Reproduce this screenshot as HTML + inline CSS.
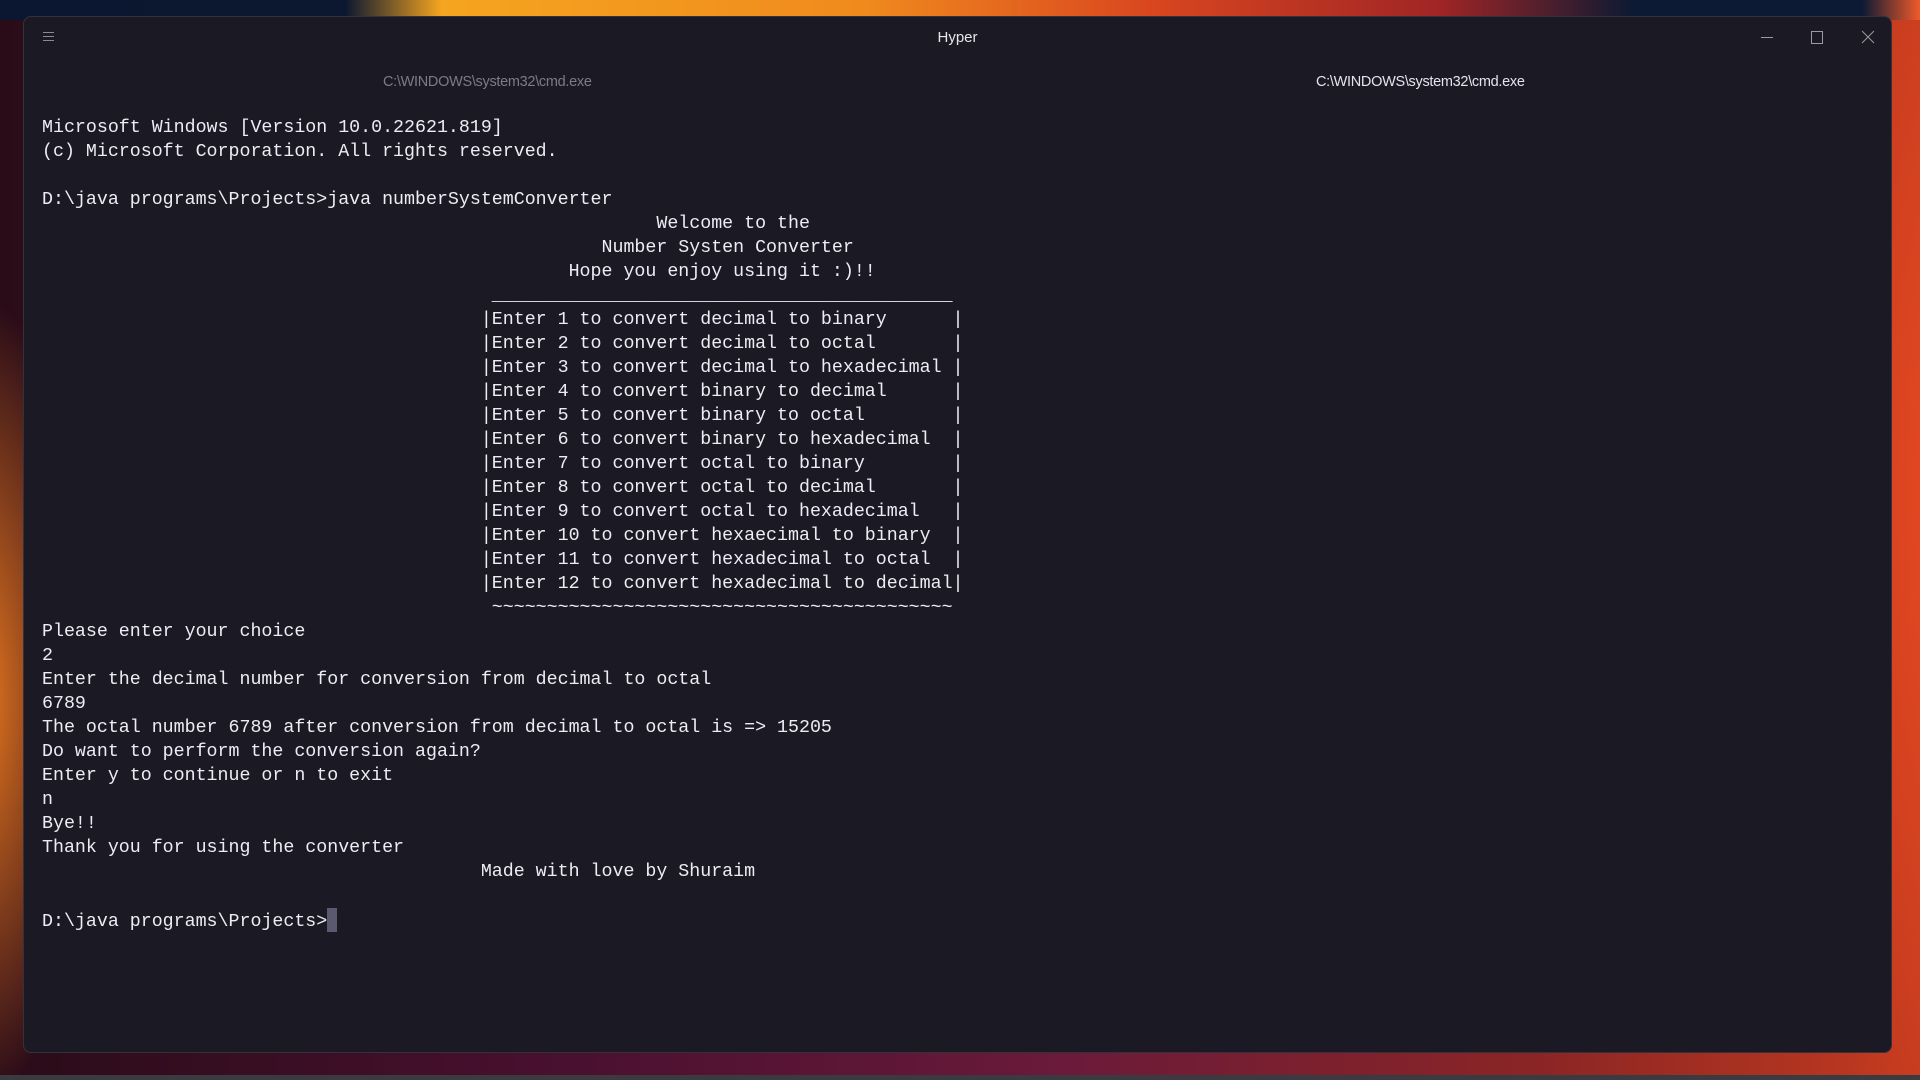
<!DOCTYPE html>
<html><head><meta charset="utf-8"><style>
html,body{margin:0;padding:0;width:1920px;height:1080px;overflow:hidden;}
body{background:
 radial-gradient(ellipse 500px 300px at 600px -40px,#f7a21c 0%,#e8661f 50%,rgba(200,60,30,0) 100%),
 radial-gradient(ellipse 700px 260px at 1200px -40px,#d9401f 0%,rgba(180,40,30,0) 100%),
 radial-gradient(ellipse 200px 700px at 1960px 500px,#e84a22 0%,rgba(200,50,30,0) 100%),
 radial-gradient(ellipse 120px 400px at -20px 700px,#e9781f 0%,rgba(200,60,30,0) 100%),
 linear-gradient(90deg,#2a0c18 0%,#4a1030 30%,#6a1a3a 55%,#8a2525 80%,#c23a1e 100%);
 position:relative;font-family:"Liberation Sans",sans-serif;}
.top{position:absolute;left:0;top:0;width:1920px;height:20px;background:linear-gradient(90deg,#0b1730 0%,#0c1830 18%,#f5a51f 23%,#f08a1e 45%,#d9461f 60%,#a02525 75%,#0d1a33 85%,#0d1a33 97%,#f05a2a 100%);}
.bot{position:absolute;left:0;top:1075px;width:1920px;height:5px;background:#3a3a40;}
.win{position:absolute;left:23px;top:16px;width:1869px;height:1037px;background:#1b1a24;border-radius:8px;border:1px solid #33323c;box-sizing:border-box;}
.title{position:absolute;left:0;width:100%;top:12px;text-align:center;color:#e6e6ea;font-size:15px;}
.tab{position:absolute;top:57px;font-size:14.5px;letter-spacing:-0.3px;}
pre{position:absolute;left:42px;top:117px;margin:0;font-family:"Liberation Mono",monospace;font-size:18.3px;line-height:23.98px;color:#ececf4;}
.cur{display:inline-block;width:10px;height:24px;background:#5b596e;vertical-align:-6px;}
.ham{position:absolute;left:19px;top:15px;width:11px;}
.ham i{display:block;height:1px;background:#8a8a92;margin-bottom:3px;}
</style></head><body>
<div class="top"></div>
<div class="bot"></div>
<div class="win">
<div class="ham"><i></i><i></i><i></i></div>
<div class="title">Hyper</div>
<div class="tab" style="left:359px;color:#7c7b86">C:\WINDOWS\system32\cmd.exe</div>
<div class="tab" style="left:1292px;color:#e4e4ec">C:\WINDOWS\system32\cmd.exe</div>
<svg style="position:absolute;left:1737px;top:12px" width="130" height="16" viewBox="0 0 130 16" fill="none" stroke="#9a9aa2" stroke-width="1">
<path d="M0 8.5H12"/><rect x="50.5" y="2.5" width="11" height="12"/><path d="M101 2L113 14M113 2L101 14"/></svg>
</div>
<pre>Microsoft Windows [Version 10.0.22621.819]
(c) Microsoft Corporation. All rights reserved.

D:\java programs\Projects&gt;java numberSystemConverter
                                                        Welcome to the
                                                   Number Systen Converter
                                                Hope you enjoy using it :)!!
                                         __________________________________________
                                        |Enter 1 to convert decimal to binary      |
                                        |Enter 2 to convert decimal to octal       |
                                        |Enter 3 to convert decimal to hexadecimal |
                                        |Enter 4 to convert binary to decimal      |
                                        |Enter 5 to convert binary to octal        |
                                        |Enter 6 to convert binary to hexadecimal  |
                                        |Enter 7 to convert octal to binary        |
                                        |Enter 8 to convert octal to decimal       |
                                        |Enter 9 to convert octal to hexadecimal   |
                                        |Enter 10 to convert hexaecimal to binary  |
                                        |Enter 11 to convert hexadecimal to octal  |
                                        |Enter 12 to convert hexadecimal to decimal|
                                         ~~~~~~~~~~~~~~~~~~~~~~~~~~~~~~~~~~~~~~~~~~
Please enter your choice
2
Enter the decimal number for conversion from decimal to octal
6789
The octal number 6789 after conversion from decimal to octal is =&gt; 15205
Do want to perform the conversion again?
Enter y to continue or n to exit
n
Bye!!
Thank you for using the converter
                                        Made with love by Shuraim

D:\java programs\Projects&gt;<span class="cur"></span></pre>
</body></html>
